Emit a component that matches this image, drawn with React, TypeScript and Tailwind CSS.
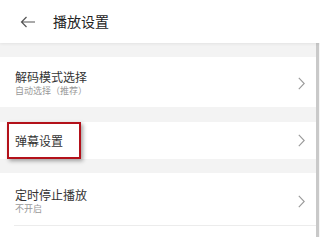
import React from "react";

type Row = {
  title: string;
  subtitle?: React.ReactNode;
  highlight?: boolean;
};

// fixed-width cells so the full-width brackets keep their em box
const decodeSubtitle = (
  <>
    自动选择
    <span className="inline-block w-[9px] text-right">（</span>
    推荐
    <span className="inline-block w-[9px] text-left">）</span>
  </>
);

const rows: Row[] = [
  { title: "解码模式选择", subtitle: decodeSubtitle },
  { title: "弹幕设置", highlight: true },
  { title: "定时停止播放", subtitle: "不开启" },
];

function Chevron() {
  return (
    <svg width="7" height="13" viewBox="0 0 7 13" className="shrink-0">
      <polyline
        points="0.8,0.8 6.2,6.5 0.8,12.2"
        fill="none"
        stroke="#9a9a9a"
        strokeWidth="1.1"
      />
    </svg>
  );
}

function SettingRow({ row }: { row: Row }) {
  return (
    <div
      className={`relative flex items-center bg-white pl-[15px] pr-[11px] ${
        row.subtitle ? "pt-[12px] pb-[10px]" : "h-[37px]"
      }`}
    >
      <div className="flex flex-1 flex-col">
        <span className="text-[12px] leading-[16px] text-[#333]">
          {row.title}
        </span>
        {row.subtitle && (
          <span className="text-[9px] leading-[12px] text-[#9a9a9a]">
            {row.subtitle}
          </span>
        )}
      </div>
      <Chevron />
      {row.highlight && (
        <div className="absolute left-[7px] top-0 h-[37px] w-[74px] border-2 border-[#b3111a] shadow-[2px_2px_4px_rgba(0,0,0,0.35)]" />
      )}
    </div>
  );
}

export default function App() {
  return (
    <main
      className="h-[237px] w-[320px] overflow-hidden bg-white"
      style={{ fontFamily: '"Noto Sans CJK SC", "Noto Sans", sans-serif' }}
    >
      <header className="relative z-10 flex h-[43px] items-center bg-white shadow-[0_1px_3px_rgba(0,0,0,0.07)]">
        <svg
          width="16"
          height="12"
          viewBox="0 0 16 12"
          className="ml-[20px]"
        >
          <path
            d="M15 6H1.5M6.5 1L1.5 6l5 5"
            fill="none"
            stroke="#555"
            strokeWidth="1.2"
          />
        </svg>
        <h1 className="ml-[17px] text-[14px] text-[#222]">播放设置</h1>
      </header>

      <div className="flex">
        <div className="flex w-[316px] flex-col bg-[#f3f3f3]">
          <div className="h-[14px]" />
          <SettingRow row={rows[0]} />
          <div className="h-[15px]" />
          <SettingRow row={rows[1]} />
          <div className="h-[14px]" />
          <div className="bg-white pt-[14px]">
            <div className="flex items-center pb-[10px] pl-[15px] pr-[11px]">
              <div className="flex flex-1 flex-col">
                <span className="text-[12px] leading-[16px] text-[#333]">
                  {rows[2].title}
                </span>
                <span className="text-[9px] leading-[12px] text-[#9a9a9a]">
                  {rows[2].subtitle}
                </span>
              </div>
              <Chevron />
            </div>
            <div className="ml-[14px] h-px bg-[#ececec]" />
            <div className="h-[20px]" />
          </div>
        </div>
        <div className="w-[3px] bg-[#c9c9c9]" />
        <div className="w-px bg-[#f6f6f6]" />
      </div>
    </main>
  );
}
